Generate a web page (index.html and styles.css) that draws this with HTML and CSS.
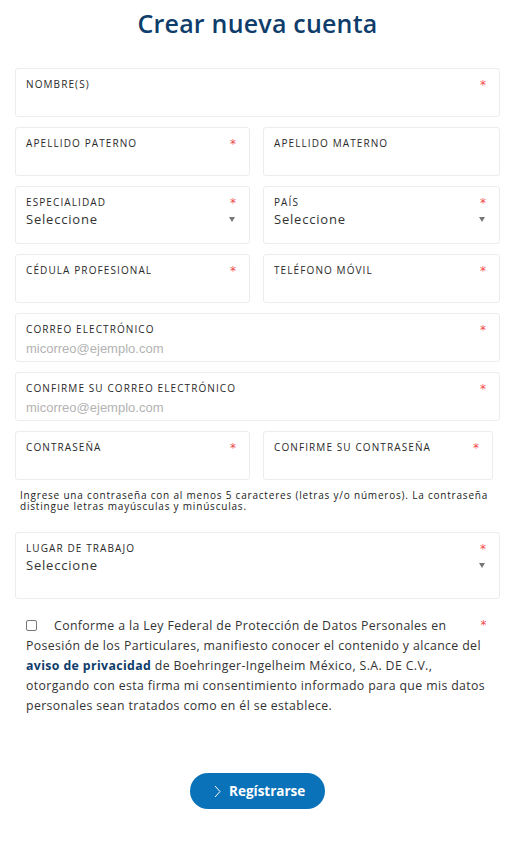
FILE: index.html
```html
<!DOCTYPE html>
<html lang="es">
<head>
<meta charset="utf-8">
<title>Crear nueva cuenta</title>
<link rel="stylesheet" href="styles.css">
</head>
<body>
<div class="page">
  <h1 class="title">Crear nueva cuenta</h1>
  <form class="form">
    <div class="field">
      <div class="label-row"><span class="label">NOMBRE(S)</span><span class="req">*</span></div>
    </div>
    <div class="row">
      <div class="field">
        <div class="label-row"><span class="label">APELLIDO PATERNO</span><span class="req">*</span></div>
      </div>
      <div class="field">
        <div class="label-row"><span class="label">APELLIDO MATERNO</span></div>
      </div>
    </div>
    <div class="row">
      <div class="field select">
        <div class="label-row"><span class="label">ESPECIALIDAD</span><span class="req">*</span></div>
        <div class="value-row"><span class="value">Seleccione</span><span class="caret"></span></div>
      </div>
      <div class="field select">
        <div class="label-row"><span class="label">PAÍS</span><span class="req">*</span></div>
        <div class="value-row"><span class="value">Seleccione</span><span class="caret"></span></div>
      </div>
    </div>
    <div class="row">
      <div class="field">
        <div class="label-row"><span class="label">CÉDULA PROFESIONAL</span><span class="req">*</span></div>
      </div>
      <div class="field">
        <div class="label-row"><span class="label">TELÉFONO MÓVIL</span><span class="req">*</span></div>
      </div>
    </div>
    <div class="field">
      <div class="label-row"><span class="label">CORREO ELECTRÓNICO</span><span class="req">*</span></div>
      <div class="placeholder">micorreo@ejemplo.com</div>
    </div>
    <div class="field">
      <div class="label-row"><span class="label">CONFIRME SU CORREO ELECTRÓNICO</span><span class="req">*</span></div>
      <div class="placeholder">micorreo@ejemplo.com</div>
    </div>
    <div class="row">
      <div class="field">
        <div class="label-row"><span class="label">CONTRASEÑA</span><span class="req">*</span></div>
      </div>
      <div class="field narrow">
        <div class="label-row"><span class="label">CONFIRME SU CONTRASEÑA</span><span class="req">*</span></div>
      </div>
    </div>
    <p class="help">Ingrese una contraseña con al menos 5 caracteres (letras y/o números). La contraseña distingue letras mayúsculas y minúsculas.</p>
    <div class="field select tall">
      <div class="label-row"><span class="label">LUGAR DE TRABAJO</span><span class="req">*</span></div>
      <div class="value-row"><span class="value">Seleccione</span><span class="caret"></span></div>
    </div>
    <div class="consent">
      <span class="req consent-req">*</span>
      <span class="box"></span>Conforme a la Ley Federal de Protección de Datos Personales en Posesión de los Particulares, manifiesto conocer el contenido y alcance del <a class="link" href="#">aviso de privacidad</a> de Boehringer-Ingelheim México, S.A. DE C.V.,<br>otorgando con esta firma mi consentimiento informado para que mis datos personales sean tratados como en él se establece.
    </div>
    <div class="actions">
      <button type="button" class="btn">
        <svg class="chev" width="7" height="13" viewBox="0 0 7 13"><path d="M1 1 L6 6.5 L1 12" fill="none" stroke="#fff" stroke-width="1"/></svg>
        <span>Regístrarse</span>
      </button>
    </div>
  </form>
</div>
</body>
</html>
```

FILE: styles.css
```css
* { box-sizing: border-box; }
body {
  margin: 0;
  background: #fff;
  font-family: "Open Sans", "DejaVu Sans", sans-serif;
  color: #333;
}
.page {
  width: 517px;
  padding: 0 17px 0 15px;
}
.title {
  margin: 8px 0 0;
  text-align: center;
  font-size: 25px;
  line-height: 30px;
  font-weight: 600;
  color: #0f3d6b;
  letter-spacing: 0.2px;
}
.form {
  margin-top: 30px;
  display: flex;
  flex-direction: column;
  gap: 10px;
}
.row {
  display: grid;
  grid-template-columns: 235px 237px;
  gap: 13px;
}
.field {
  height: 49px;
  border: 1px solid #ececec;
  border-radius: 3px;
  padding: 9px 13px 0 10px;
}
.field.select { height: 58px; }
.field.tall { height: 67px; }
.field.narrow { width: 230px; padding-right: 13px; }
.label-row {
  display: flex;
  justify-content: space-between;
  align-items: flex-start;
  height: 12px;
}
.label {
  font-size: 10px;
  line-height: 12px;
  letter-spacing: 1.1px;
  color: #2a2a2a;
}
.req {
  color: #f0494b;
  font-size: 12px;
  line-height: 14px;
  font-family: "DejaVu Sans", sans-serif;
}
.value-row {
  display: flex;
  justify-content: space-between;
  align-items: center;
  margin-top: 3px;
}
.value {
  font-size: 13px;
  line-height: 16px;
  color: #333;
  letter-spacing: 0.8px;
}
.caret {
  width: 0;
  height: 0;
  border-left: 3.5px solid transparent;
  border-right: 3.5px solid transparent;
  border-top: 5px solid #777;
  margin-right: 1px;
}
.placeholder {
  margin-top: 6px;
  font-family: "Liberation Sans", Arial, sans-serif;
  font-size: 13px;
  line-height: 15px;
  color: #b3b3b3;
}
.help {
  margin: 0;
  padding: 0 0 10px 5px;
  font-size: 10px;
  line-height: 11px;
  letter-spacing: 0.8px;
  color: #222;
}
.consent {
  margin-top: 7px;
  padding: 0 13px 0 11px;
  font-size: 12.3px;
  line-height: 20px;
  color: #333;
  letter-spacing: 0.38px;
}
.consent-req { float: right; margin-top: 2px; }
.box {
  display: inline-block;
  width: 11px;
  height: 11px;
  border: 1px solid #777;
  border-radius: 2px;
  margin-right: 17px;
  vertical-align: -1px;
}
.link {
  color: #0f3d6b;
  font-weight: 700;
  text-decoration: none;
}
.actions {
  display: flex;
  justify-content: center;
  margin-top: 47px;
}
.btn {
  display: flex;
  align-items: center;
  gap: 8px;
  width: 135px;
  height: 36px;
  border: none;
  border-radius: 18px;
  background: #0a72b9;
  color: #fff;
  padding: 0 0 0 24px;
  font-family: "Open Sans", sans-serif;
  font-size: 13.5px;
  font-weight: 700;
}
```
